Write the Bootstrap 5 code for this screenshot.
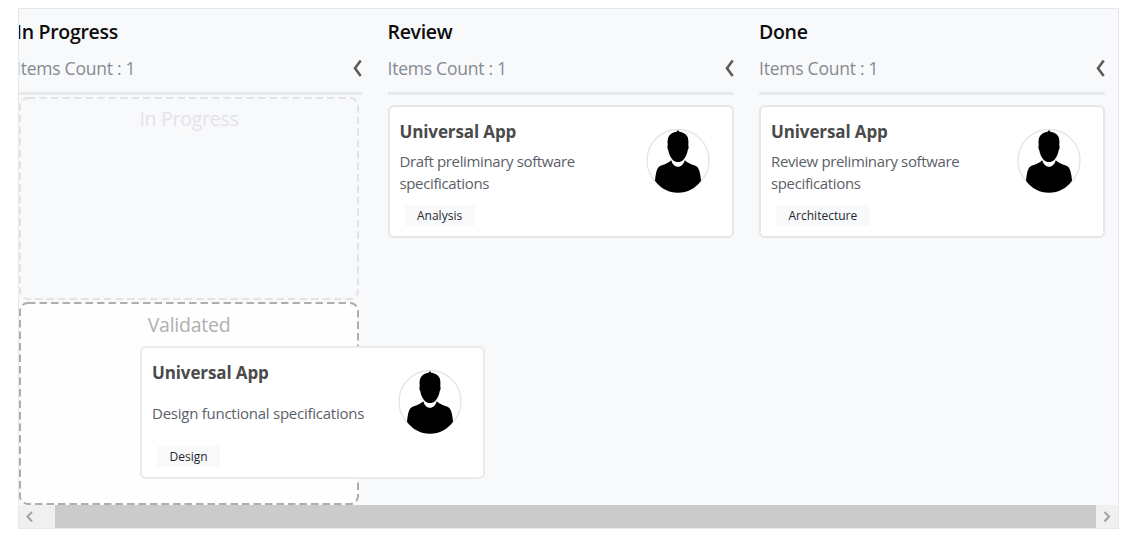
<!DOCTYPE html>
<html lang="en">
<head>
<meta charset="utf-8">
<meta name="viewport" content="width=device-width, initial-scale=1">
<title>Kanban board</title>
<link rel="stylesheet" href="https://cdn.jsdelivr.net/npm/bootstrap@5.3.0/dist/css/bootstrap.min.css">
<style>
  body { font-family: "Open Sans", "Noto Sans", sans-serif; background: #fff; overflow: hidden; }
  .board { width: 1101px; height: 521px; margin: 8px 0 0 18px; border: 1px solid #e7e8ea; background: #f8f9fb; }
  /* the board is scrolled sideways, so the first column starts left of the frame */
  .lanes { gap: 25.5px; margin-left: -3px; padding-top: 9px; }
  .lane { width: 346px; }
  .lane-head { height: 77px; border-bottom: 3px solid #e8e9eb; }
  .lane-title { font-size: 19.5px; line-height: 28px; font-weight: 600; color: #0c0c0c; letter-spacing: -.3px; }
  .lane-sub { font-size: 17.5px; line-height: 24px; margin-top: 9.5px; color: #868a91; letter-spacing: -.24px; }
  .task { width: 346px; height: 133px; border: 2px solid #e5e6e9; border-radius: 6px; background: #fff; padding: 13px 22px 0 10px; }
  .task-title { font-size: 17px; line-height: 24px; font-weight: 700; color: #4a4a4a; letter-spacing: -.12px; }
  .task-desc { height: 43px; margin-top: 7px; width: 214px; font-size: 15px; line-height: 21.5px; letter-spacing: -.36px; color: #5b5f69; }
  .task-tag { margin: 11px 0 0 5px; height: 20.5px; line-height: 21px; padding: 0 12.5px; font-size: 12px; color: #25282c; background: #f8f9fb; border-radius: 2px; }
  .avatar { margin-top: 8px; }
  .drop { width: 340px; margin-left: 3px; position: relative; }
  .drop svg { display: block; }
  .drop-label { position: absolute; top: 10px; left: 0; width: 100%; text-align: center; font-size: 19.5px; line-height: 27px; letter-spacing: -.25px; }
  .dragging { position: absolute; left: 140px; top: 346px; width: 345px; border-color: #e9eaec; padding-right: 21px; }
  .hbar { height: 23px; background: #f0f0f0; }
  .hbar-btn { width: 22px; height: 23px; }
  .hbar-thumb { background: #cbcbcb; margin-left: 14px; }
</style>
<script src="https://cdn.jsdelivr.net/npm/bootstrap@5.3.0/dist/js/bootstrap.bundle.min.js"></script>
</head>
<body class="position-relative">

<svg width="0" height="0" class="position-absolute">
  <symbol id="person" viewBox="0 0 64 66">
    <circle cx="32" cy="32.5" r="31" fill="#fff" stroke="#e6e6e8" stroke-width="1.4"/>
    <path d="M32 2l1.300 1.800c3.400.3 6.300 1.900 7.900 4.400 1.300 2.200 1.400 5.600 1.100 9.200.5 1.200.4 3.200-.5 4.600-.7 4.300-2.400 7.700-4.600 10-1.700 1.500-3.300 2-5.200 2s-3.500-.5-5.200-2c-2.200-2.300-3.900-5.700-4.600-10-.9-1.400-1-3.400-.5-4.600-.4-4.200-.2-7.600 1.500-9.600C25 5.300 27.300 4.200 30.500 3.800z"/>
    <path d="M25.200 32.200c1.200 3.800 3.700 6.600 6.800 6.600s5.600-2.800 6.800-6.600c2.500 2.600 6.100 3.900 9.500 5.100 3.200 1.100 4.700 3.500 5.500 7.100.6 2.700 1 5.500 1.200 8.400C49.500 60.500 41.500 64.700 32 64.700S14.500 60.500 9 52.800c.2-2.900.6-5.700 1.200-8.400.8-3.600 2.300-6 5.500-7.100 3.400-1.200 7-2.500 9.500-5.100z"/>
  </symbol>
  <symbol id="collapse" viewBox="0 0 10 20"><path d="M8.700 2.600L3 10.300l5.700 7.700" fill="none" stroke="#5c5c5c" stroke-width="2.600"/></symbol>
</svg>

<div class="board d-flex flex-column overflow-hidden">
  <main class="lanes d-flex flex-grow-1">
    <section class="lane flex-shrink-0">
      <header class="lane-head">
        <div class="lane-title">In Progress</div>
        <div class="lane-sub d-flex justify-content-between align-items-center"><span>Items Count : 1</span><svg width="10" height="20"><use href="#collapse"/></svg></div>
      </header>
      <div class="drop" style="height:207px;padding-top:2px">
        <svg width="340" height="203"><rect x="1" y="1" width="338" height="201" rx="8" fill="none" stroke="#e2e3e5" stroke-width="2" stroke-dasharray="7.500 4"/></svg>
        <div class="drop-label" style="color:#e3e4e6">In Progress</div>
      </div>
      <div class="drop">
        <svg width="340" height="203"><rect x="1" y="1" width="338" height="201" rx="8" fill="#fefefe" stroke="#aeaeae" stroke-width="2" stroke-dasharray="7.500 4"/></svg>
        <div class="drop-label" style="color:#b0b0b0;top:9px">Validated</div>
      </div>
    </section>

    <section class="lane flex-shrink-0">
      <header class="lane-head">
        <div class="lane-title">Review</div>
        <div class="lane-sub d-flex justify-content-between align-items-center"><span>Items Count : 1</span><svg width="10" height="20"><use href="#collapse"/></svg></div>
      </header>
      <article class="task d-flex justify-content-between" style="margin-top:10px">
        <div>
          <div class="task-title">Universal App</div>
          <div class="task-desc d-flex align-items-center"><span>Draft preliminary software specifications</span></div>
          <div class="task-tag d-inline-block">Analysis</div>
        </div>
        <svg class="avatar flex-shrink-0" width="64" height="66"><use href="#person"/></svg>
      </article>
    </section>

    <section class="lane flex-shrink-0">
      <header class="lane-head">
        <div class="lane-title">Done</div>
        <div class="lane-sub d-flex justify-content-between align-items-center"><span>Items Count : 1</span><svg width="10" height="20"><use href="#collapse"/></svg></div>
      </header>
      <article class="task d-flex justify-content-between" style="margin-top:10px">
        <div>
          <div class="task-title">Universal App</div>
          <div class="task-desc d-flex align-items-center"><span>Review preliminary software specifications</span></div>
          <div class="task-tag d-inline-block">Architecture</div>
        </div>
        <svg class="avatar flex-shrink-0" width="64" height="66"><use href="#person"/></svg>
      </article>
    </section>
  </main>

  <div class="hbar d-flex flex-shrink-0">
    <svg class="hbar-btn flex-shrink-0" viewBox="0 0 22 23"><path d="M13 7L8.500 11.500l4.500 5" fill="none" stroke="#a2a2a2" stroke-width="2"/></svg>
    <div class="hbar-thumb flex-grow-1"></div>
    <svg class="hbar-btn flex-shrink-0" viewBox="0 0 22 23"><path d="M8.500 7L13 11.500l-4.500 5" fill="none" stroke="#a2a2a2" stroke-width="2"/></svg>
  </div>
</div>

<article class="task dragging d-flex justify-content-between">
  <div>
    <div class="task-title">Universal App</div>
    <div class="task-desc d-flex align-items-center" style="letter-spacing:-.25px"><span class="text-nowrap">Design functional specifications</span></div>
    <div class="task-tag d-inline-block">Design</div>
  </div>
  <svg class="avatar flex-shrink-0" width="64" height="66"><use href="#person"/></svg>
</article>
</body>
</html>
